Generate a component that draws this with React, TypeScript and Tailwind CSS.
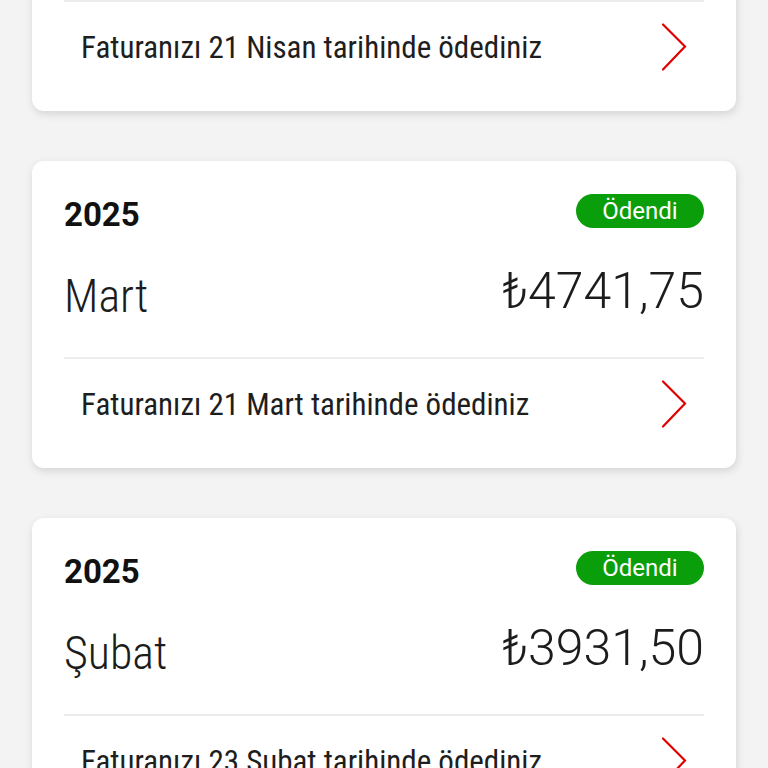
import React from "react";

type Bill = { year: string; month: string; amount: string; note: string };

const bills: Bill[] = [
  { year: "2025", month: "Nisan", amount: "₺4815,20", note: "Faturanızı 21 Nisan tarihinde ödediniz" },
  { year: "2025", month: "Mart", amount: "₺4741,75", note: "Faturanızı 21 Mart tarihinde ödediniz" },
  { year: "2025", month: "Şubat", amount: "₺3931,50", note: "Faturanızı 23 Şubat tarihinde ödediniz" },
];

function Chevron() {
  return (
    <svg width="26" height="48" viewBox="0 0 26 48" fill="none" className="shrink-0">
      <polyline
        points="2,1.5 24,23.5 2,46.5"
        stroke="#e00000"
        strokeWidth="2.2"
        strokeLinecap="round"
        strokeLinejoin="miter"
        fill="none"
      />
    </svg>
  );
}

function BillCard({ bill }: { bill: Bill }) {
  return (
    <div className="bg-white rounded-xl shadow-[1px_3px_8px_rgba(0,0,0,0.13)] px-8 pt-[33px] pb-[19px] text-[#1c1c1c]">
      <div className="flex justify-between items-start h-[34px]">
        <span className="mt-[4px] font-[Roboto,sans-serif] font-bold text-[33px] leading-none text-[#111]">
          {bill.year}
        </span>
        <span className="h-[34px] w-[128px] rounded-full bg-[#0b9e0b] text-white flex items-center justify-center font-[Roboto,sans-serif] text-[24px] leading-none pb-[1px]">
          Ödendi
        </span>
      </div>
      <div className="flex justify-between items-start h-[129px]">
        <span className="mt-[45px] font-[Roboto,sans-serif] font-stretch-condensed font-light text-[46px] leading-none">
          {bill.month}
        </span>
        <span className="mt-[38px] font-[Roboto,sans-serif] font-light text-[50px] leading-none">
          {bill.amount}
        </span>
      </div>
      <div className="h-[2px] bg-[#ececec]" />
      <div className="h-[90px] flex items-center justify-between pl-[17px] pr-[17px]">
        <span className="font-[Roboto,sans-serif] font-stretch-condensed text-[31px] leading-none text-[#1e1e1e]">
          {bill.note}
        </span>
        <Chevron />
      </div>
    </div>
  );
}

export default function App() {
  return (
    <div className="h-[768px] overflow-hidden bg-[#f3f3f3]">
      <div className="mt-[-196px] px-8 flex flex-col gap-[50px]">
        {bills.map((b, i) => (
          <BillCard key={i} bill={b} />
        ))}
      </div>
    </div>
  );
}
